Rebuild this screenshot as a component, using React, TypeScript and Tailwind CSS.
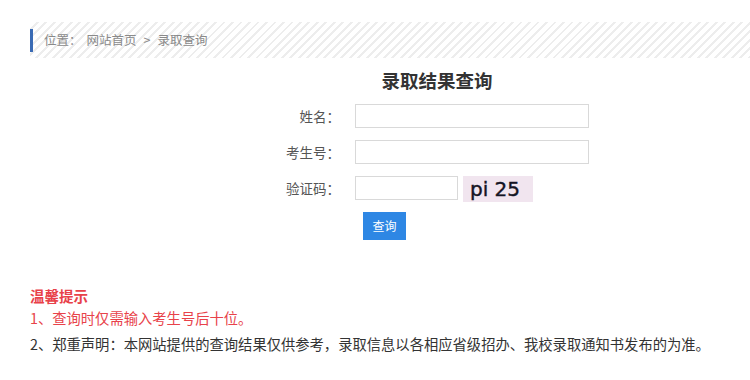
const font = { fontFamily: '"Noto Sans CJK SC", "Noto Sans", sans-serif' };

function Row({ label, children }: { label: string; children: React.ReactNode }) {
  return (
    <div className="flex items-center h-[24px]">
      <span className="w-[70px] text-right text-[13.5px] text-[#555]">{label}</span>
      <div className="ml-[15px] flex items-center">{children}</div>
    </div>
  );
}

export default function App() {
  return (
    <div className="w-[750px] h-[380px] bg-white overflow-hidden" style={font}>
      <div className="pt-[22px] pl-[30px]">
        <div className="h-[36px] flex items-center bg-[repeating-linear-gradient(-45deg,#ededed_0px,#ededed_2px,#ffffff_2px,#ffffff_6px)]">
          <div className="h-[23px] border-l-[3px] border-[#3a6bb5] pl-[11px] flex items-center text-[12.5px] text-[#8a8a8a]">
            <span>位置：</span>
            <span className="ml-[5px]">网站首页</span>
            <span className="mx-[7px]">&gt;</span>
            <span>录取查询</span>
          </div>
        </div>
      </div>

      <div className="ml-[270px] w-[334px]">
        <h1 className="mt-[9px] text-center text-[18.5px] leading-[26px] font-bold text-[#333]">录取结果查询</h1>
        <div className="mt-[11px] flex flex-col gap-[12px]">
          <Row label="姓名：">
            <input className="w-[234px] h-[24px] border border-[#d9d9d9] outline-none" />
          </Row>
          <Row label="考生号：">
            <input className="w-[234px] h-[24px] border border-[#d9d9d9] outline-none" />
          </Row>
          <Row label="验证码：">
            <input className="w-[103px] h-[24px] border border-[#d9d9d9] outline-none" />
            <div className="ml-[5px] w-[70px] h-[26px] mt-[2px] bg-[#f1e5ef] flex items-center pl-[7px] text-[20px] text-[#141424] [-webkit-text-stroke:0.4px_#141424]" style={{ fontFamily: '"DejaVu Sans", sans-serif' }}>
              pi 25
            </div>
          </Row>
        </div>
        <button className="mt-[12px] ml-[93px] w-[43px] h-[28px] bg-[#2e87e4] text-white text-[12px]">查询</button>
      </div>

      <div className="pl-[30px] mt-[46px]">
        <div className="text-[14.5px] font-bold text-[#e8424a] leading-[20px]">温馨提示</div>
        <div className="mt-[2px] text-[14.3px] text-[#e8424a] leading-[20px]">1、查询时仅需输入考生号后十位。</div>
        <div className="mt-[6px] text-[14.3px] text-[#333] leading-[20px]">2、郑重声明：本网站提供的查询结果仅供参考，录取信息以各相应省级招办、我校录取通知书发布的为准。</div>
      </div>
    </div>
  );
}
